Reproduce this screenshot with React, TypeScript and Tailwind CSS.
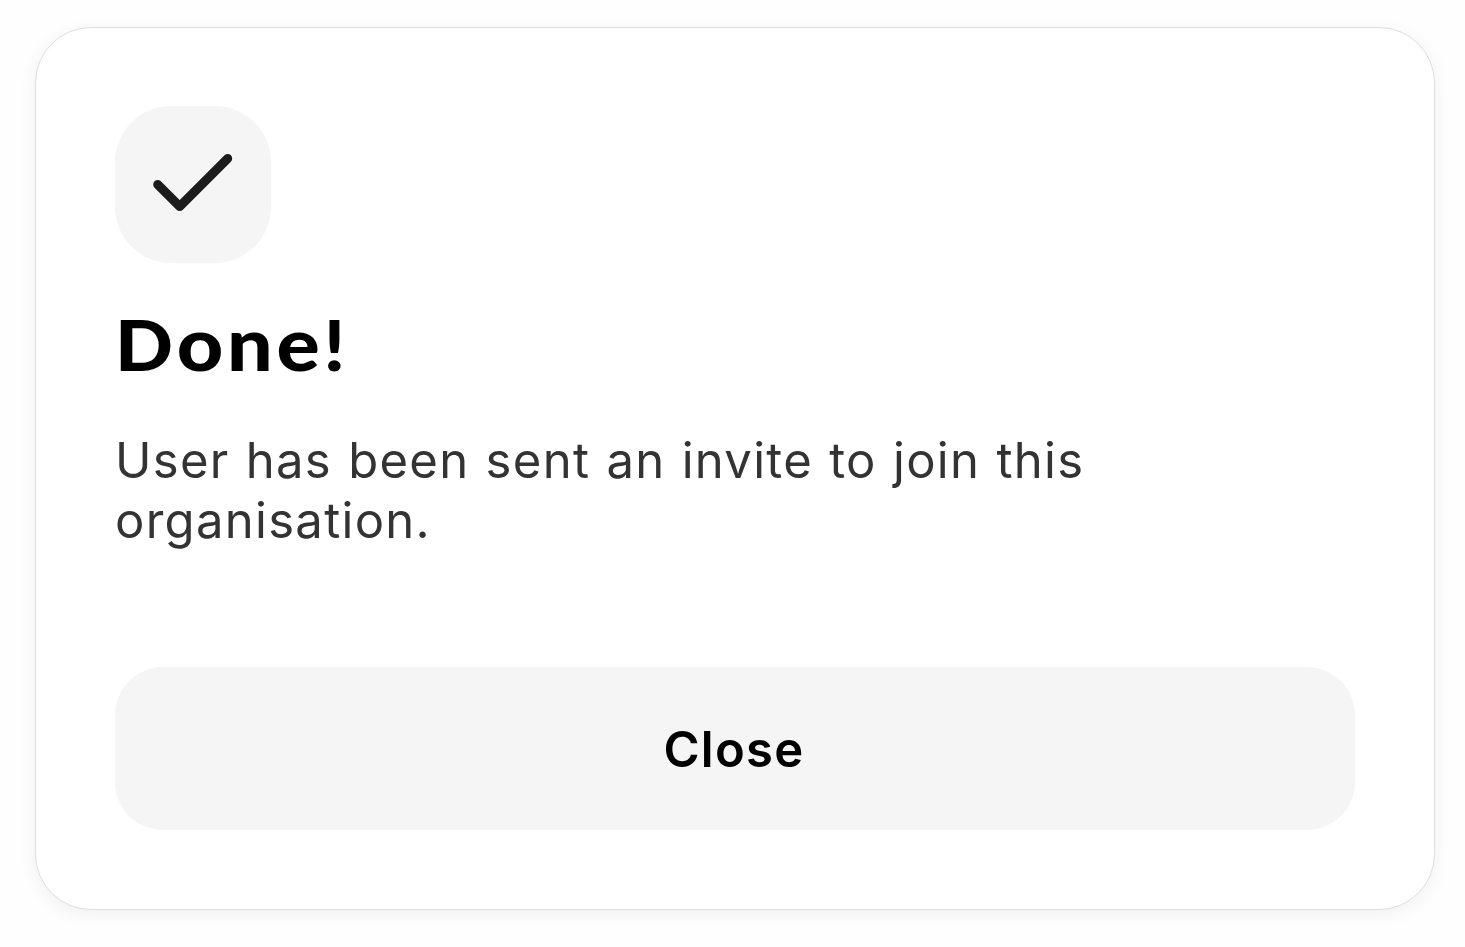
export default function App() {
  return (
    <div className="h-[947px] w-full overflow-hidden bg-[#fefefe] pt-[27px] pl-[35px]">
      <InviteSentDialog />
    </div>
  )
}

function InviteSentDialog() {
  return (
    <div
      role="dialog"
      aria-labelledby="dialog-title"
      className="flex h-[883px] w-[1400px] flex-col rounded-[56px] border border-[#dedede] bg-white px-[79px] pt-[78px] pb-[79px] shadow-[0_4px_18px_rgba(0,0,0,0.06)]"
    >
      <div className="flex h-[157px] w-[156px] shrink-0 items-center justify-center rounded-[56px] bg-[#f5f5f5]">
        <svg viewBox="0 0 156 157" fill="none" className="size-full">
          <path d="M42.7 78.5L64.7 100.5L112.7 52.5" stroke="#1c1c1c" strokeWidth="9" strokeLinecap="round" strokeLinejoin="round" />
        </svg>
      </div>

      <h1
        id="dialog-title"
        className="mt-[37px] h-[88px] origin-left scale-x-[1.09] font-['Lato',sans-serif] text-[70px] leading-[88px] font-black tracking-[3.4px] text-black"
      >
        D<span className="text-[74px] leading-none">one</span>!
      </h1>

      <p className="mt-[43px] w-[1100px] font-['Inter',sans-serif] text-[49px] leading-[60px] tracking-[1.3px] text-[#333333] [word-spacing:1.1px]">
        User has been sent an invite to join this organisation.
      </p>

      <button
        type="button"
        className="mt-auto h-[163px] w-full shrink-0 rounded-[48px] bg-[#f5f5f5] pt-[2px] pr-[2px] font-['Inter',sans-serif] text-[49px] font-semibold tracking-[1.3px] text-black"
      >
        Close
      </button>
    </div>
  )
}
